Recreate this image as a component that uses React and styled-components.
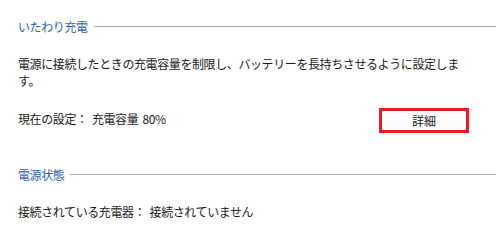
import React from "react";
import styled, { createGlobalStyle } from "styled-components";

const Global = createGlobalStyle`
  html, body { margin: 0; padding: 0; background: #ffffff; }
  body {
    font-family: "Noto Sans CJK JP", "Noto Sans", sans-serif;
    font-size: 12px;
    letter-spacing: -0.4px;
    word-spacing: 2px;
    color: #1a1a1a;
  }
`;

const Page = styled.div`
  width: 500px;
  height: 243px;
  box-sizing: border-box;
  padding: 18px 4px 0 18px;
  display: flex;
  flex-direction: column;
`;

const SectionTitle = styled.div`
  display: flex;
  align-items: center;
  gap: 6px;
  height: 17px;
  line-height: 17px;
  color: #2f5fae;
  margin-top: ${(p) => p.$top || 0}px;
`;

const Rule = styled.div`
  flex: 1;
  height: 1px;
  background: #a8a8a8;
`;

const Text = styled.div`
  line-height: 17px;
  margin-top: ${(p) => p.$top || 0}px;
  max-width: ${(p) => p.$max || "none"};
`;

const SettingRow = styled.div`
  display: grid;
  grid-template-columns: 361px 90px;
  align-items: start;
  margin-top: 19px;
`;

const SettingText = styled.div`
  line-height: 17px;
  padding-top: 2px;
`;

const DetailButton = styled.button`
  box-sizing: border-box;
  width: 90px;
  height: 25px;
  border: 3px solid #e81d25;
  background: #fcfcfc;
  font: inherit;
  letter-spacing: 0;
  color: #1a1a1a;
  padding: 0;
  line-height: 19px;
  cursor: pointer;
`;

export default function App() {
  return (
    <>
      <Global />
      <Page>
        <SectionTitle>
          いたわり充電
          <Rule />
        </SectionTitle>
        <Text $top={20} $max="448px">
          電源に接続したときの充電容量を制限し、バッテリーを長持ちさせるように設定します。
        </Text>
        <SettingRow>
          <SettingText>現在の設定： 充電容量 80%</SettingText>
          <DetailButton>詳細</DetailButton>
        </SettingRow>
        <SectionTitle $top={33}>
          電源状態
          <Rule />
        </SectionTitle>
        <Text $top={20}>接続されている充電器： 接続されていません</Text>
      </Page>
    </>
  );
}
